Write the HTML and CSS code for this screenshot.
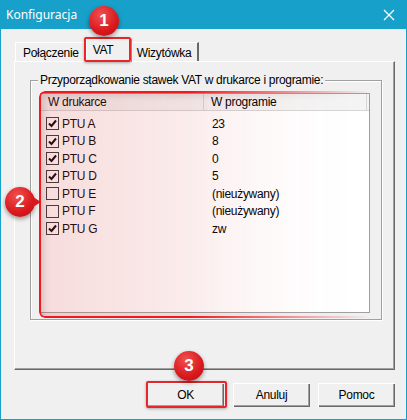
FILE: index.html
```html
<!DOCTYPE html>
<html lang="pl">
<head>
    <meta charset="UTF-8">
    <title>Konfiguracja</title>
    <link rel="stylesheet" href="styles.css">
</head>
<body>

<div class="window">
    <div class="titlebar">
        <span class="title">Konfiguracja</span>
        <svg class="close" width="12" height="12" viewBox="0 0 12 12">
            <path d="M1 1 L11 11 M11 1 L1 11" stroke="#fff" stroke-width="1.2" fill="none"/>
        </svg>
    </div>

    <div class="content">
        <div class="tabs">
            <div class="tab">Połączenie</div>
            <div class="tab active">VAT</div>
            <div class="tab last">Wizytówka</div>
        </div>

        <div class="panel">
            <div class="group">
                <span class="group-label">Przyporządkowanie stawek VAT w drukarce i programie:</span>
                <div class="list">
                    <div class="list-head">
                        <div class="head-cell first">W drukarce</div>
                        <div class="head-cell second">W programie</div>
                        <div class="head-cell rest"></div>
                    </div>
                    <div class="rows" id="rows"></div>
                </div>
            </div>
        </div>

        <div class="buttons">
            <button class="btn">OK</button>
            <button class="btn">Anuluj</button>
            <button class="btn">Pomoc</button>
        </div>
    </div>

    <!-- annotations -->
    <div class="mark mark-tab"></div>
    <div class="mark-list"></div>
    <div class="mark mark-ok"></div>
    <div class="badge badge-1">1</div>
    <div class="badge badge-2">2</div>
    <div class="badge badge-3">3</div>
</div>

<script>
    var data = [
        { name: "PTU A", value: "23", on: true },
        { name: "PTU B", value: "8", on: true },
        { name: "PTU C", value: "0", on: true },
        { name: "PTU D", value: "5", on: true },
        { name: "PTU E", value: "(nieużywany)", on: false },
        { name: "PTU F", value: "(nieużywany)", on: false },
        { name: "PTU G", value: "zw", on: true }
    ];

    var tick = '<svg width="11" height="11" viewBox="0 0 11 11"><path d="M2 5.5 L4.5 8 L9 2.5" stroke="#000" stroke-width="2" fill="none"/></svg>';
    var rows = document.getElementById("rows");

    data.forEach(function (item) {
        rows.innerHTML += '<div class="row">' +
            '<div class="cell first"><span class="check">' + (item.on ? tick : '') + '</span>' + item.name + '</div>' +
            '<div class="cell second">' + item.value + '</div>' +
            '</div>';
    });
</script>

</body>
</html>
```

FILE: styles.css
```css
body {
    margin: 0;
    font-family: "Liberation Sans", Arial, sans-serif;
    font-size: 12px;
    letter-spacing: -0.3px;
    color: #000;
}

.window {
    position: relative;
    width: 407px;
    height: 420px;
    box-sizing: border-box;
    background: #f0f0f0;
    border: 1px solid #17a0c9;
    border-top: none;
    overflow: hidden;
}

.titlebar {
    height: 29px;
    margin: 0 -1px;
    background: #17a0c9;
    display: flex;
    align-items: center;
    justify-content: space-between;
    padding: 0 12px 0 6px;
}

.title {
    font-family: "Noto Sans", sans-serif;
    font-size: 12px;
    letter-spacing: 0;
    color: #fff;
}

.content {
    padding: 0 11px 0 13px;
}

.tabs {
    display: flex;
    align-items: flex-end;
    height: 32px;
    padding-left: 1px;
}

.tab {
    height: 19px;
    box-sizing: border-box;
    padding: 3px 6px 0 7px;
    border-top: 1px solid #fff;
    border-left: 1px solid #fff;
    border-right: 1px solid #a0a0a0;
    background: #f0f0f0;
}

.tab.active {
    position: relative;
    height: 24px;
    margin-bottom: -1px;
    padding: 4px 8px 0 6px;
    width: 46px;
}

.tab.last {
    border-right: 2px solid #696969;
    padding-left: 4px;
}

.panel {
    height: 309px;
    box-sizing: border-box;
    border-top: 1px solid #fff;
    border-left: 1px solid #fff;
    border-right: 1px solid #696969;
    border-bottom: 1px solid #696969;
    box-shadow: inset -1px -1px 0 #a0a0a0;
    padding: 18px 0 0 15px;
}

.group {
    width: 352px;
    height: 240px;
    box-sizing: border-box;
    border: 1px solid #a0a0a0;
    box-shadow: inset 1px 1px 0 #fff, 1px 1px 0 #fff;
    padding: 0 0 0 9px;
}

.group-label {
    display: block;
    width: fit-content;
    margin: -8px 0 0 -2px;
    padding: 0 2px;
    line-height: 15px;
    background: #f0f0f0;
}

.list {
    margin-top: 5px;
    width: 330px;
    height: 220px;
    box-sizing: border-box;
    border: 1px solid #a0a0a0;
    background: #fff;
}

.list-head {
    display: flex;
    height: 16px;
    background: #f4f4f4;
    border-bottom: 1px solid #d5d5d5;
}

.head-cell {
    line-height: 16px;
    box-sizing: border-box;
    border-right: 1px solid #d5d5d5;
}

.head-cell.first { width: 163px; padding-left: 7px; }
.head-cell.second { width: 163px; padding-left: 7px; }
.head-cell.rest { flex: 1; border-right: none; }

.rows {
    padding-top: 4px;
}

.row {
    display: flex;
    height: 17.5px;
    align-items: center;
}

.cell.first {
    width: 163px;
    display: flex;
    align-items: center;
    padding-left: 5px;
    box-sizing: border-box;
}

.cell.second {
    padding-left: 8px;
}

.check {
    width: 13px;
    height: 13px;
    box-sizing: border-box;
    border: 1px solid #333;
    background: #fff;
    margin-right: 3px;
    display: flex;
    align-items: center;
    justify-content: center;
}

.buttons {
    display: flex;
    justify-content: flex-end;
    gap: 8px;
    margin-top: 13px;
}

.btn {
    width: 77px;
    height: 24px;
    font-family: "Liberation Sans", Arial, sans-serif;
    font-size: 12px;
    letter-spacing: -0.3px;
    background: #f0f0f0;
    border: none;
    box-shadow: inset 1px 1px 0 #fff, inset -1px -1px 0 #696969, inset -2px -2px 0 #a0a0a0;
    padding: 0;
}

.btn:first-child {
    margin-right: 1px;
}

/* red annotations */
.mark {
    position: absolute;
    border: 2px solid #e8262a;
    border-radius: 2px;
    box-shadow: 0 1px 3px rgba(0, 0, 0, 0.3);
}

.mark-tab { left: 83px; top: 37px; width: 43px; height: 21px; }
.mark-ok { left: 145px; top: 381px; width: 77px; height: 23px; }

.mark-list {
    position: absolute;
    left: 38px;
    top: 91px;
    width: 328px;
    height: 223px;
    border: 2px solid #f0191e;
    border-radius: 6px;
    background: linear-gradient(to right, rgba(215, 80, 80, 0.2), rgba(215, 80, 80, 0.1) 50%, rgba(255, 255, 255, 0));
    box-shadow: inset 3px 3px 6px rgba(0, 0, 0, 0.12);
    -webkit-mask-image: linear-gradient(to right, #000 45%, rgba(0, 0, 0, 0) 100%);
    mask-image: linear-gradient(to right, #000 45%, rgba(0, 0, 0, 0) 100%);
}

.badge {
    position: absolute;
    width: 30px;
    height: 30px;
    border-radius: 50%;
    background: radial-gradient(circle at 40% 30%, #f25050, #d8181d 60%, #b81015);
    box-shadow: 0 2px 4px rgba(0, 0, 0, 0.4);
    color: #fff;
    font-family: "Liberation Sans", Arial, sans-serif;
    font-size: 17px;
    font-weight: bold;
    letter-spacing: 0;
    line-height: 30px;
    text-align: center;
}

.badge-1 { left: 88px; top: 6px; }
.badge-2 { left: 4px; top: 187px; }
.badge-3 { left: 173px; top: 351px; }

.badge-2::after {
    content: "";
    position: absolute;
    right: -6px;
    top: 10px;
    border-top: 5px solid transparent;
    border-bottom: 5px solid transparent;
    border-left: 8px solid #d8181d;
}
```
